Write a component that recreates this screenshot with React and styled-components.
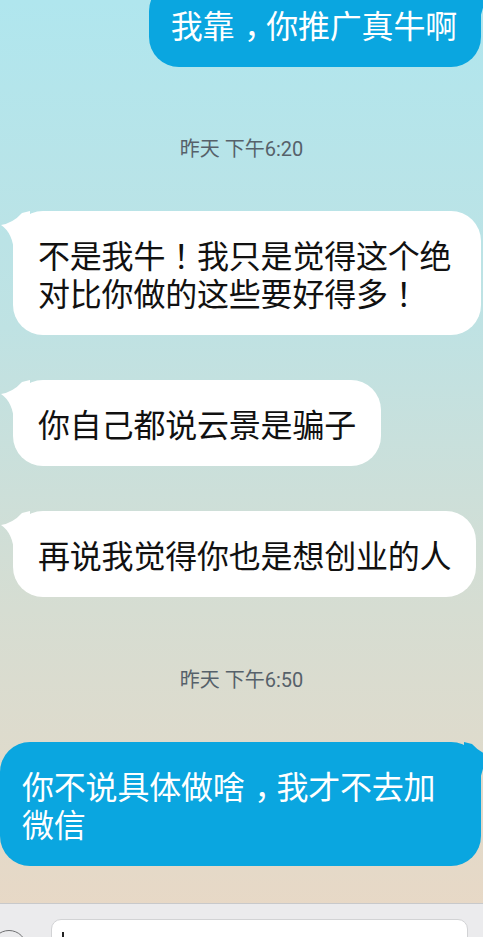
import React from 'react';
import styled, { createGlobalStyle } from 'styled-components';

const GlobalStyle = createGlobalStyle`
  html, body {
    margin: 0;
    padding: 0;
    overflow: hidden;
  }
  body {
    font-family: "Noto Sans CJK SC", "Noto Sans", Roboto, sans-serif;
  }
`;

const Screen = styled.div`
  width: 483px;
  height: 937px;
  display: flex;
  flex-direction: column;
  overflow: hidden;
  background: linear-gradient(180deg, #b0e6ee 0%, #bfe2e3 35%, #d6ddd2 65%, #e9d8c5 100%);
`;

const Thread = styled.div`
  flex: 1;
  overflow: hidden;
  display: flex;
  flex-direction: column;
`;

const Row = styled.div`
  display: flex;
  justify-content: ${(p) => (p.$side === 'out' ? 'flex-end' : 'flex-start')};
  margin-top: ${(p) => p.$gap}px;
  padding: ${(p) => (p.$side === 'out' ? '0 2px 0 0' : '0 0 0 13px')};
`;

const Bubble = styled.div`
  position: relative;
  box-sizing: border-box;
  max-width: ${(p) => (p.$side === 'out' ? '481px' : '468px')};
  padding: ${(p) => (p.$side === 'out' ? '24px 24px 24px 22px' : '24px 25px')};
  border-radius: 30px;
  background: ${(p) => (p.$side === 'out' ? '#0aa6e0' : '#ffffff')};
  color: ${(p) => (p.$side === 'out' ? '#ffffff' : '#111111')};
  font-size: 32px;
  line-height: 38px;
  letter-spacing: -0.2px;
  word-break: break-all;
`;

// the phone centres full-width punctuation in its cell
const Bang = styled.span`
  font-family: "Noto Sans CJK KR", "Noto Sans CJK SC", sans-serif;
`;

const Comma = styled.span`
  padding-left: 0.3em;
  margin-right: -0.3em;
`;

const Tail = styled.svg`
  position: absolute;
  top: 0;
  width: 30px;
  height: 42px;
  ${(p) => (p.$side === 'out' ? 'right: -13px; transform: scaleX(-1);' : 'left: -13px;')}
  fill: ${(p) => (p.$side === 'out' ? '#0aa6e0' : '#ffffff')};
`;

const Stamp = styled.div`
  margin-top: ${(p) => p.$gap}px;
  text-align: center;
  font-family: Roboto, "Noto Sans CJK SC", sans-serif;
  font-size: 20px;
  line-height: 24px;
  color: #56616a;
`;

const Composer = styled.div`
  height: 34px;
  flex-shrink: 0;
  box-sizing: border-box;
  border-top: 1px solid #c8c9cb;
  background: #ebebed;
  display: flex;
  align-items: flex-start;
  padding-top: 15px;
  overflow: hidden;
`;

const EmojiButton = styled.div`
  width: 34px;
  height: 34px;
  flex-shrink: 0;
  margin: 11px 0 0 -9px;
  border: 1.5px solid #6f7072;
  border-radius: 50%;
`;

const Input = styled.div`
  flex: 1;
  height: 60px;
  margin: 0 15px 0 24px;
  box-sizing: border-box;
  background: #ffffff;
  border: 1px solid #d2d3d5;
  border-radius: 10px;
  padding: 12px 0 0 10px;
`;

const Caret = styled.div`
  width: 1.5px;
  height: 22px;
  background: #222;
`;

const messages = [
  { kind: 'msg', side: 'out', gap: -19, text: '我靠，你推广真牛啊' },
  { kind: 'time', gap: 70, text: '昨天 下午6:20' },
  { kind: 'msg', side: 'in', gap: 50, text: '不是我牛！我只是觉得这个绝对比你做的这些要好得多！' },
  { kind: 'msg', side: 'in', gap: 45, text: '你自己都说云景是骗子' },
  { kind: 'msg', side: 'in', gap: 45, text: '再说我觉得你也是想创业的人' },
  { kind: 'time', gap: 71, text: '昨天 下午6:50' },
  { kind: 'msg', side: 'out', gap: 50, text: '你不说具体做啥，我才不去加微信' },
];

const renderText = (text) =>
  text.split(/([，！])/).map((part, i) => {
    if (part === '！') return <Bang key={i}>{part}</Bang>;
    if (part === '，') return <Comma key={i}>{part}</Comma>;
    return part;
  });

const App = () => {
  return (
    <Screen>
      <GlobalStyle />
      <Thread>
        {messages.map((m, i) =>
          m.kind === 'time' ? (
            <Stamp key={i} $gap={m.gap}>{m.text}</Stamp>
          ) : (
            <Row key={i} $side={m.side} $gap={m.gap}>
              <Bubble $side={m.side}>
                <Tail $side={m.side} viewBox="0 0 30 42">
                  <path d="M1 14 Q13 12 22 2 L30 0 L30 42 L14 42 Q13 22 1 14 Z" />
                </Tail>
                {renderText(m.text)}
              </Bubble>
            </Row>
          )
        )}
      </Thread>
      <Composer>
        <EmojiButton />
        <Input>
          <Caret />
        </Input>
      </Composer>
    </Screen>
  );
};

export default App;
